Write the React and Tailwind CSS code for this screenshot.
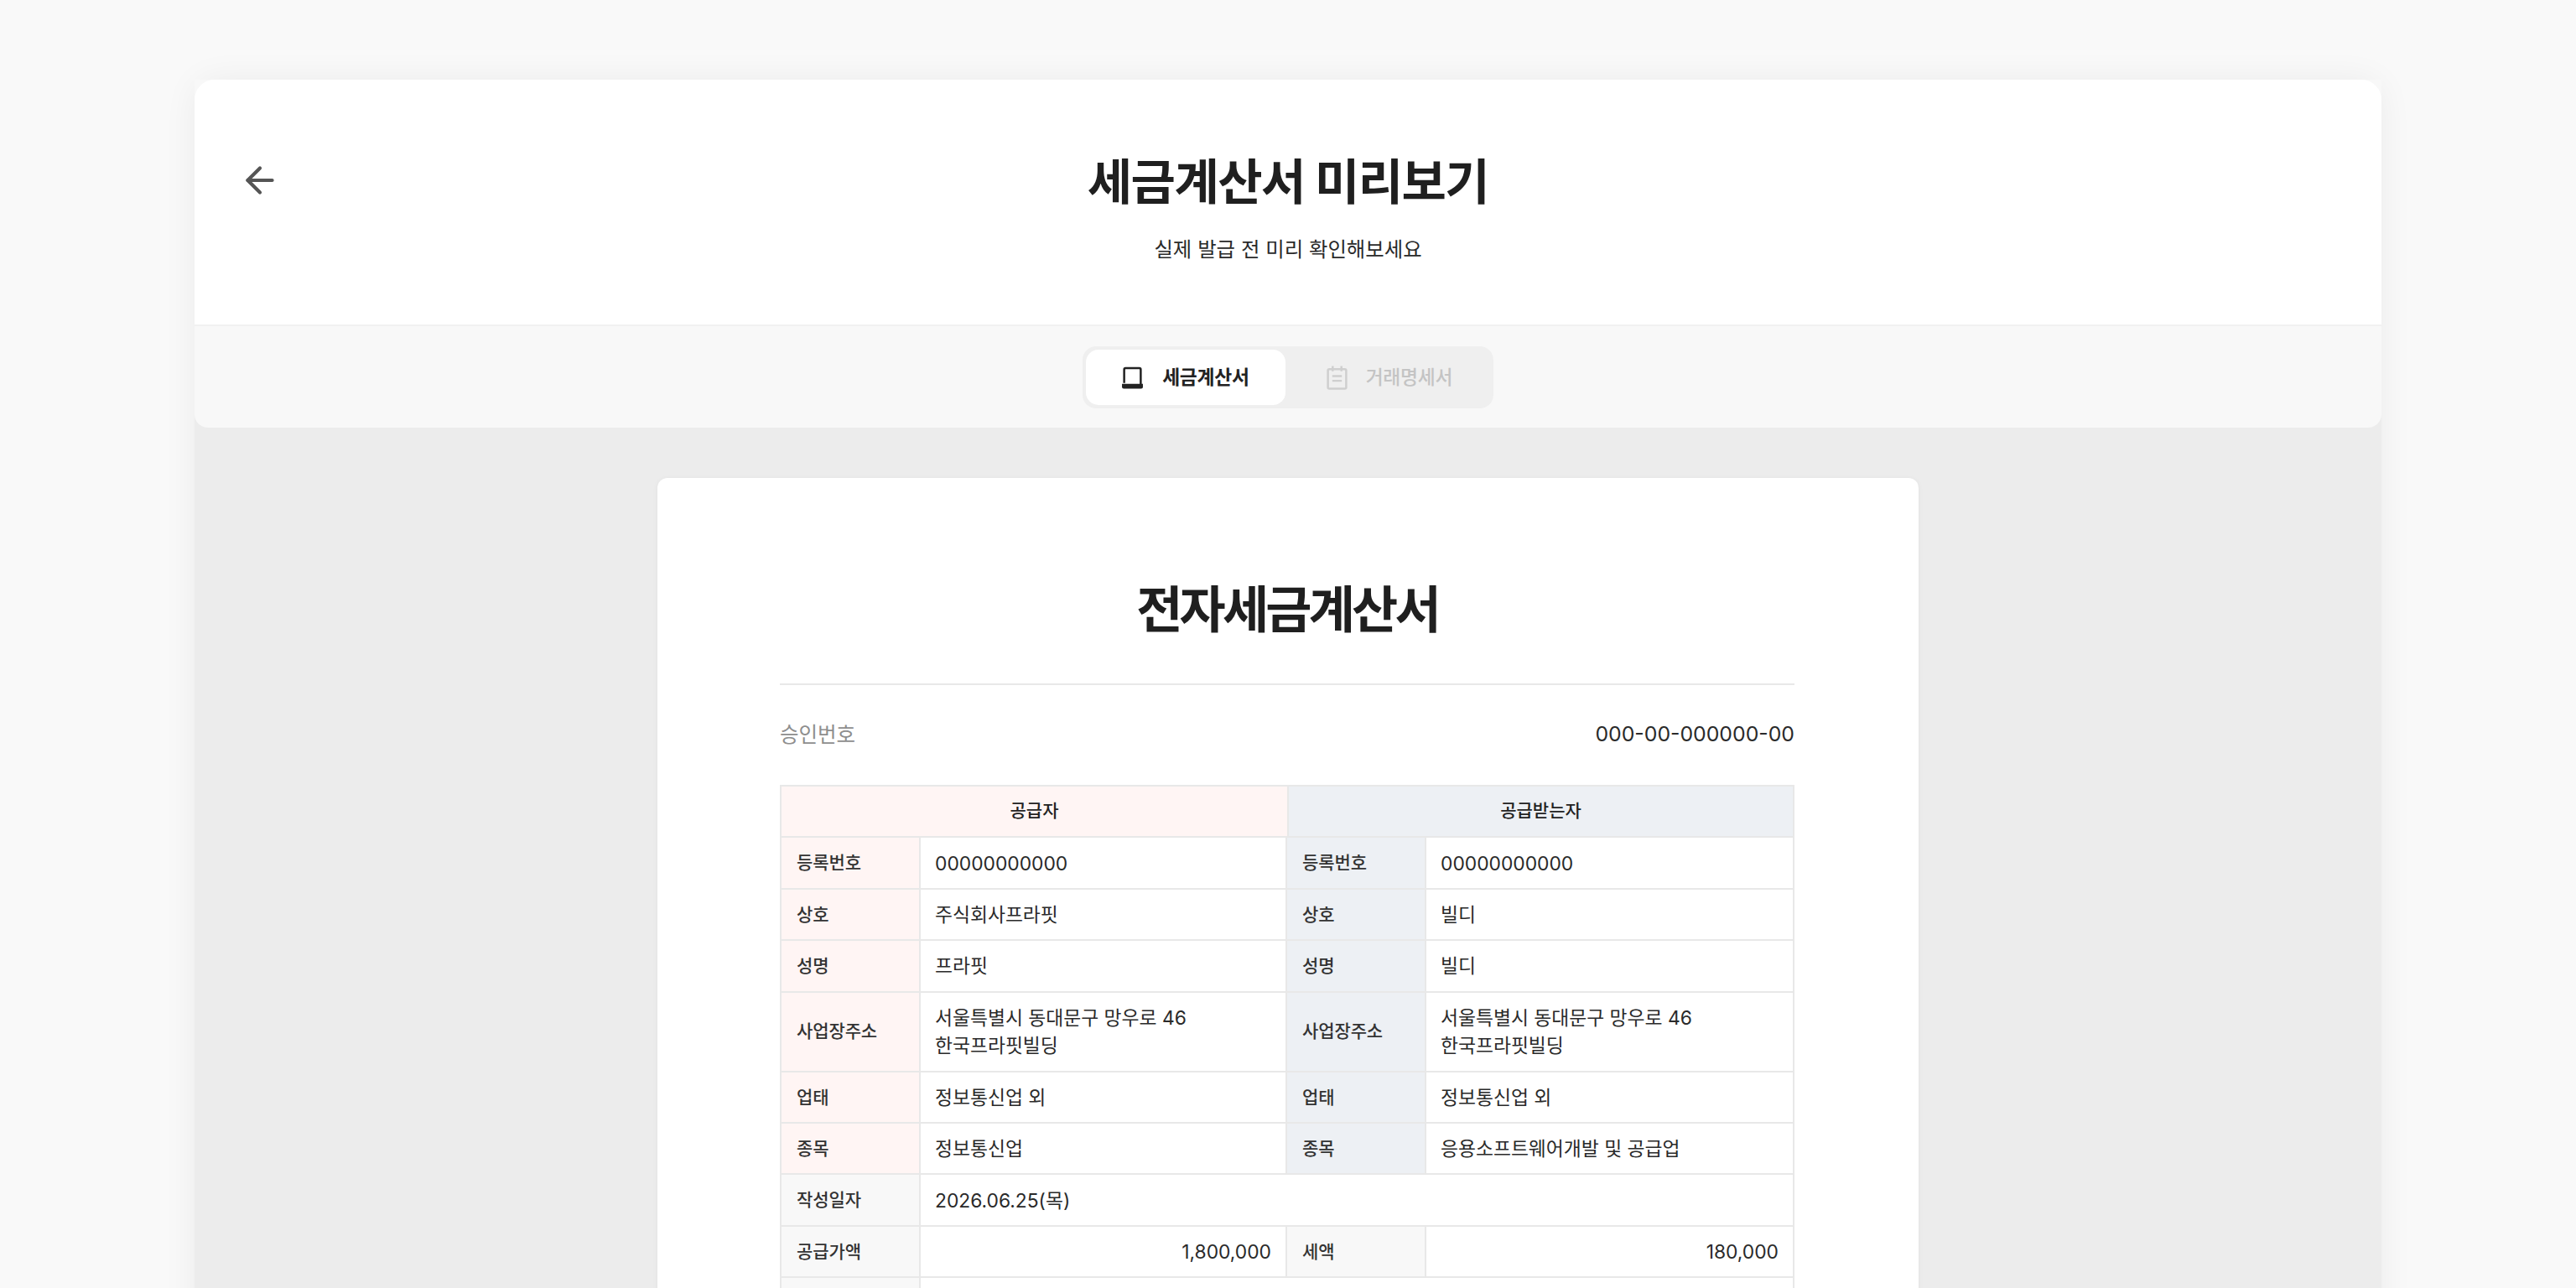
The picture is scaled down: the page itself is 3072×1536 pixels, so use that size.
import React from "react";
import { ArrowLeft } from "lucide-react";

const FONT = "font-['Inter','Noto_Sans_CJK_KR',sans-serif]";

function Label({ tone, children }) {
  const bg = tone === "red" ? "bg-[#fff5f4]" : tone === "blue" ? "bg-[#edf0f4]" : "bg-[#f8f8f8]";
  return (
    <div className={`${bg} flex items-center pl-[18px] border-r-2 border-[#e8e8e8] text-[21px] font-medium text-[#333333] tracking-[-0.005em]`}>
      {children}
    </div>
  );
}

function Value({ right, last, children }) {
  return (
    <div className={`flex items-center px-[17px] text-[22.8px] leading-[33px] text-[#2a2a2a] bg-white ${right ? "justify-end" : ""} ${last ? "" : "border-r-2 border-[#e8e8e8]"}`}>
      <div>{children}</div>
    </div>
  );
}

function Row({ h, children }) {
  return (
    <div className={`grid grid-cols-[166px_437px_166px_1fr] border-b-2 border-[#e8e8e8] ${h}`}>
      {children}
    </div>
  );
}

const parties = [
  ["등록번호", "00000000000", "00000000000", "h-[61.4px]"],
  ["상호", "주식회사프라핏", "빌디", "h-[61.4px]"],
  ["성명", "프라핏", "빌디", "h-[61.4px]"],
  ["사업장주소", <>서울특별시 동대문구 망우로 46<br />한국프라핏빌딩</>, <>서울특별시 동대문구 망우로 46<br />한국프라핏빌딩</>, "h-[95px]"],
  ["업태", "정보통신업 외", "정보통신업 외", "h-[61.4px]"],
  ["종목", "정보통신업", "응용소프트웨어개발 및 공급업", "h-[61.4px]"],
];

export default function App() {
  return (
    <div className={`${FONT} h-[1536px] overflow-hidden bg-[#f9f9f9] pt-[95px]`}>
      <div className="mx-auto w-[2608px] h-[1600px] bg-[#ececec] rounded-t-[24px] shadow-[0_0_40px_rgba(0,0,0,0.06)]">
        <div className="bg-[#f8f8f8] rounded-b-[16px]">
          <header className="relative h-[294px] bg-white rounded-t-[24px] border-b-2 border-[#f1f1f1] flex flex-col items-center">
            <ArrowLeft className="absolute left-[53px] top-[95px] text-[#555555]" size={50} strokeWidth={2} />
            <h1 className="mt-[82px] text-[58px] leading-[80px] font-bold text-[#1f1f1f] tracking-[-0.027em]">세금계산서 미리보기</h1>
            <p className="mt-[20px] text-[24.4px] leading-[40px] text-[#2a2a2a]">실제 발급 전 미리 확인해보세요</p>
          </header>
          <div className="h-[121px] flex justify-center pt-[24px]">
            <div className="w-[490px] h-[74px] rounded-[16px] bg-[#efefef] p-[4px] flex gap-[4px]">
              <button className="w-[238px] rounded-[15px] bg-white flex items-center justify-center gap-[22px] pr-[1px] text-[22.8px] font-semibold text-[#222222] tracking-[-0.01em]">
                <svg width="27" height="27" viewBox="0 0 26 26" fill="none" className="shrink-0">
                  <path d="M3.5 19V3.5a1.5 1.5 0 0 1 1.5-1.5h16a1.5 1.5 0 0 1 1.5 1.5V22" stroke="#222" strokeWidth="2.4" />
                  <path d="M1 20h24v3.5a2 2 0 0 1-2 2H3a2 2 0 0 1-2-2z" fill="#222" />
                </svg>
                세금계산서
              </button>
              <button className="w-[240px] rounded-[15px] flex items-center justify-center gap-[22px] text-[22.8px] font-medium text-[#c4c4c4] tracking-[-0.01em]">
                <svg width="25" height="29" viewBox="0 0 24 28" fill="none" className="shrink-0" stroke="#cfcfcf" strokeWidth="2.4">
                  <rect x="1.5" y="4" width="21" height="22.5" rx="1.5" />
                  <path d="M7 0.5v6M17 0.5v6M6.5 12h11M6.5 17.5h11" />
                </svg>
                거래명세서
              </button>
            </div>
          </div>
        </div>

        <main className="mx-auto mt-[60px] w-[1504px] h-[1100px] bg-white rounded-t-[12px] pl-[146px] pr-[148px] pt-[117px] shadow-[0_1px_6px_rgba(0,0,0,0.05)]">
          <h2 className="text-center text-[60px] leading-[80px] font-bold text-[#1f1f1f] tracking-[-0.064em]">전자세금계산서</h2>
          <div className="mt-[48px] h-[2px] bg-[#e8e8e8]" />
          <div className="mt-[39px] mb-[40px] flex justify-between items-center h-[40px]">
            <span className="text-[24.5px] text-[#8e8e8e]">승인번호</span>
            <span className="text-[24.8px] text-[#2a2a2a]">000-00-000000-00</span>
          </div>

          <div className="border-2 border-b-0 border-[#e8e8e8]">
            <div className="grid grid-cols-[605px_1fr] h-[61.4px] border-b-2 border-[#e8e8e8] text-[21px] font-medium text-[#222222]">
              <div className="bg-[#fff5f4] border-r-2 border-[#e8e8e8] flex items-center justify-center pb-[2px]">공급자</div>
              <div className="bg-[#edf0f4] flex items-center justify-center pb-[2px]">공급받는자</div>
            </div>
            {parties.map(([label, a, b, h]) => (
              <Row key={label} h={h}>
                <Label tone="red">{label}</Label>
                <Value>{a}</Value>
                <Label tone="blue">{label}</Label>
                <Value last>{b}</Value>
              </Row>
            ))}
            <div className="grid grid-cols-[166px_1fr] h-[61.4px] border-b-2 border-[#e8e8e8]">
              <Label>작성일자</Label>
              <Value last>2026.06.25(목)</Value>
            </div>
            <Row h="h-[61.4px]">
              <Label>공급가액</Label>
              <Value right>1,800,000</Value>
              <Label>세액</Label>
              <Value right last>180,000</Value>
            </Row>
            <div className="grid grid-cols-[166px_1fr] h-[61.4px]">
              <div className="bg-[#f8f8f8] border-r-2 border-[#e8e8e8]" />
              <div className="bg-white" />
            </div>
          </div>
        </main>
      </div>
    </div>
  );
}
